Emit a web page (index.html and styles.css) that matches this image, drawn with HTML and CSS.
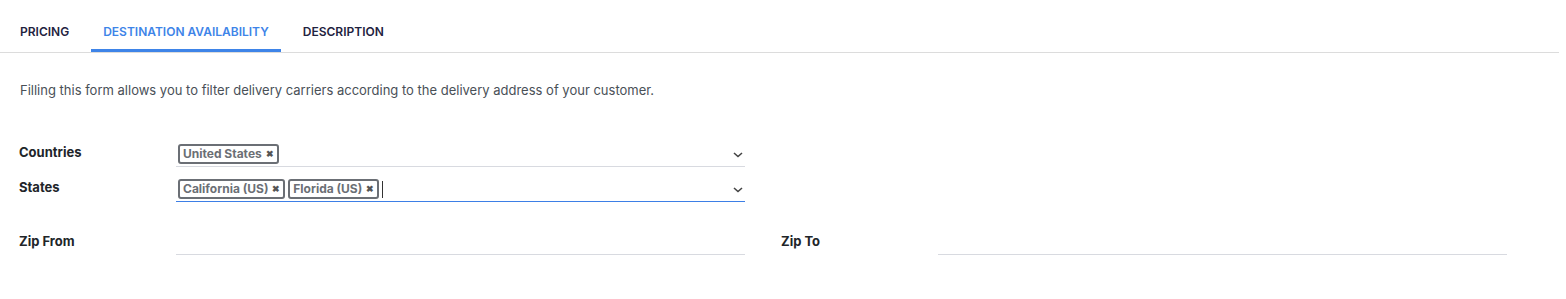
FILE: index.html
```html
<!DOCTYPE html>
<html lang="en">
<head>
  <meta charset="UTF-8">
  <meta name="viewport" content="width=device-width, initial-scale=1.0">
  <title>Destination Availability</title>
  <link rel="stylesheet" href="styles.css">
</head>
<body>
  <div class="notebook">
    <!-- Tabs -->
    <ul class="tabs">
      <li class="tab">PRICING</li>
      <li class="tab active">DESTINATION AVAILABILITY</li>
      <li class="tab">DESCRIPTION</li>
    </ul>

    <div class="page">
      <p class="hint">Filling this form allows you to filter delivery carriers according to the delivery address of your customer.</p>

      <div class="group">
        <div class="row">
          <label class="label">Countries</label>
          <div class="field many2many">
            <div class="tags">
              <span class="tag">United States <span class="del">&#x2716;</span></span>
            </div>
            <svg class="caret" width="10" height="6" viewBox="0 0 10 6"><path d="M1 1l4 3.5L9 1" fill="none" stroke="#444" stroke-width="1.6"/></svg>
          </div>
        </div>
        <div class="row">
          <label class="label">States</label>
          <div class="field many2many focused">
            <div class="tags">
              <span class="tag">California (US) <span class="del">&#x2716;</span></span>
              <span class="tag">Florida (US) <span class="del">&#x2716;</span></span>
              <span class="cursor"></span>
            </div>
            <svg class="caret" width="10" height="6" viewBox="0 0 10 6"><path d="M1 1l4 3.5L9 1" fill="none" stroke="#444" stroke-width="1.6"/></svg>
          </div>
        </div>
      </div>

      <div class="zip-grid">
        <div class="row">
          <label class="label">Zip From</label>
          <div class="field plain"></div>
        </div>
        <div class="row">
          <label class="label">Zip To</label>
          <div class="field plain"></div>
        </div>
      </div>
    </div>
  </div>
</body>
</html>
```

FILE: styles.css
```css
body {
  font-family: Inter, Roboto, "Liberation Sans", sans-serif;
  margin: 0;
  padding: 0;
  background: #fff;
  color: #212529;
}

.notebook {
  width: 1559px;
}

.tabs {
  list-style: none;
  margin: 0;
  padding: 13px 0 0 8px;
  display: flex;
  gap: 10px;
  border-bottom: 1px solid #dcdcdc;
}

.tab {
  font-size: 12px;
  font-weight: 600;
  color: #1f2340;
  padding: 0 12px;
  height: 39px;
  line-height: 38px;
  box-sizing: border-box;
  border-bottom: 3px solid transparent;
}

.tab.active {
  color: #3e84e8;
  border-bottom-color: #3e84e8;
}

.page {
  padding: 0 19px;
}

.hint {
  margin: 28px 0 0 1px;
  font-size: 13px;
  color: #495057;
  line-height: 18px;
}

.group {
  margin-top: 44px;
  width: 726px;
}

.row {
  display: flex;
  align-items: flex-start;
}

.label {
  width: 157px;
  flex-shrink: 0;
  font-size: 13px;
  font-weight: 700;
  color: #212529;
  line-height: 18px;
}

.field {
  flex: 1;
  border-bottom: 1px solid #d8dae0;
  display: flex;
  align-items: center;
}

.many2many {
  height: 23px;
  margin-bottom: 11px;
}

.many2many.focused {
  border-bottom: 1px solid #3d7fe6;
  margin-bottom: 0;
}

.tags {
  flex: 1;
  display: flex;
  align-items: center;
  gap: 3px;
  padding-left: 2px;
  padding-top: 1px;
  align-self: flex-start;
}

.tag {
  border: 2px solid #6b6f75;
  border-radius: 3px;
  font-size: 12px;
  font-weight: 700;
  color: #6b6f75;
  height: 20px;
  box-sizing: border-box;
  line-height: 16px;
  padding: 0 3px;
  white-space: nowrap;
}

.del {
  font-size: 9px;
  margin-left: 1px;
  color: #555;
  vertical-align: 1px;
}

.cursor {
  width: 1px;
  height: 17px;
  background: #333;
}

.caret {
  margin-right: 2px;
  margin-top: 1px;
}

.zip-grid {
  display: grid;
  grid-template-columns: 726px 726px;
  column-gap: 36px;
  margin-top: 30px;
}

.plain {
  height: 22px;
}
```
